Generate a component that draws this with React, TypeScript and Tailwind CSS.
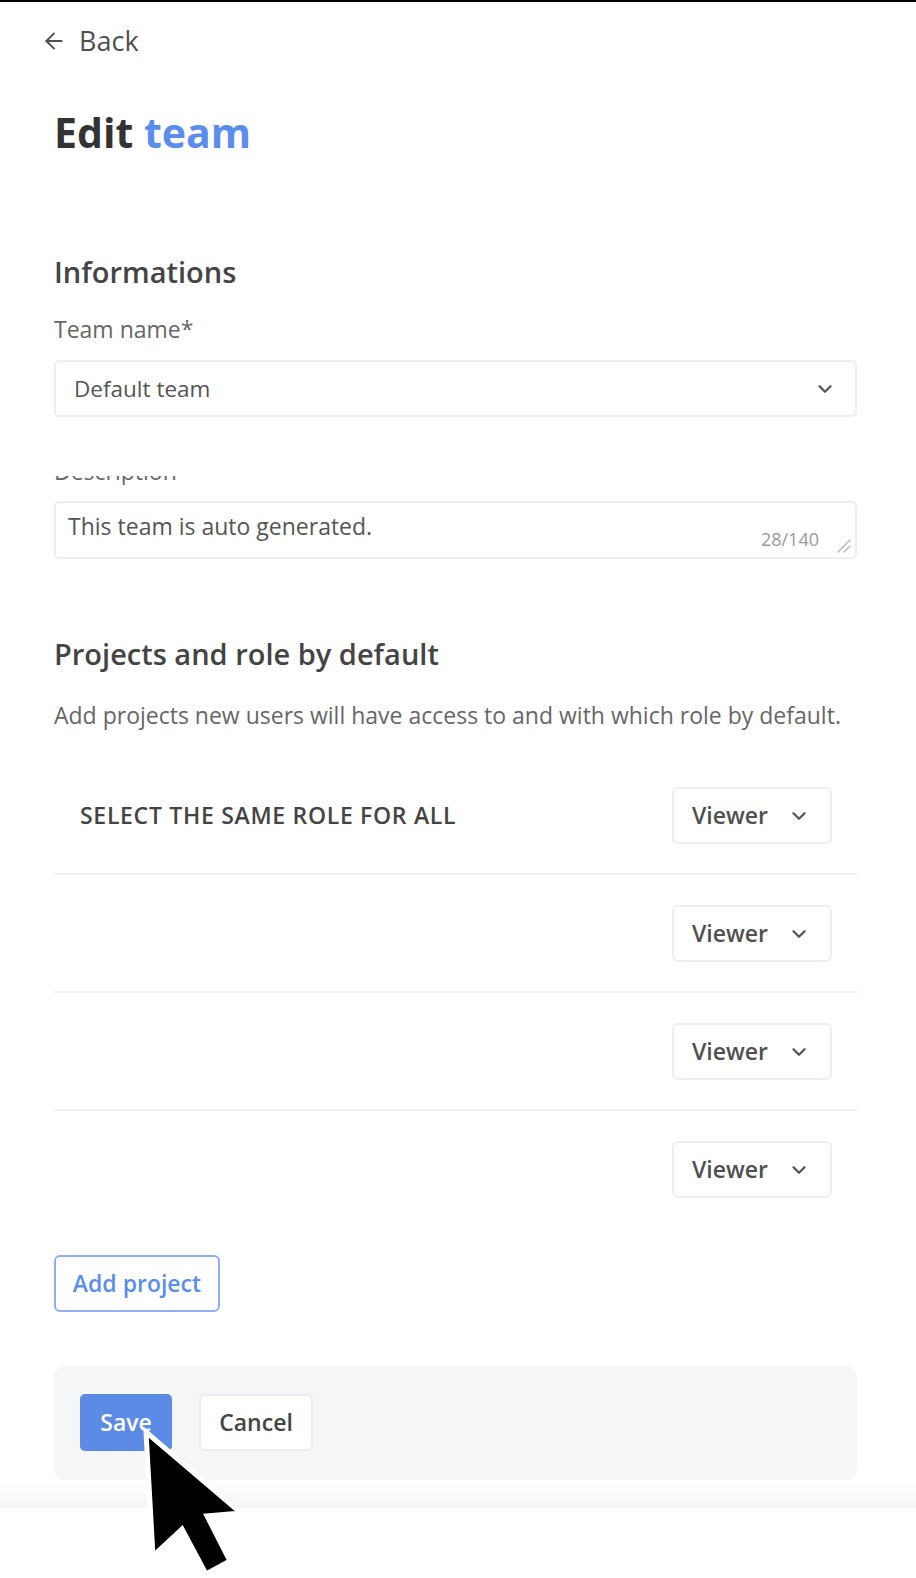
import { ArrowLeft, ChevronDown } from "lucide-react";

const FONT = { fontFamily: '"Open Sans", "Liberation Sans", sans-serif' };

function RoleSelect() {
  return (
    <button className="flex h-[57px] w-[160px] items-center justify-between rounded-[6px] border-2 border-[#eceef2] bg-white pl-[18px] pr-[20px] text-[23px] font-semibold text-[#505050]">
      <span>Viewer</span>
      <ChevronDown size={22} strokeWidth={2.5} className="text-[#555]" />
    </button>
  );
}

function ProjectRow({ label, last }: { label?: string; last?: boolean }) {
  return (
    <div
      className={`flex items-center justify-between pb-[29px] pl-[26px] pr-[25px] pt-[30px] ${
        last ? "" : "border-b-2 border-[#eef0f3]"
      }`}
    >
      <span className="text-[23px] font-semibold uppercase tracking-[0.7px] text-[#444]">{label}</span>
      <RoleSelect />
    </div>
  );
}

export default function App() {
  return (
    <div className="relative min-h-[1578px] w-[916px] overflow-hidden bg-white" style={FONT}>
      <div className="h-[2px] bg-black" />

      <a className="ml-[41px] mt-[24px] flex h-[30px] w-fit items-center gap-[12px] text-[27px] font-medium text-[#4f4f4f]">
        <ArrowLeft size={26} strokeWidth={1.8} />
        <span>Back</span>
      </a>

      <div className="ml-[54px] w-[803px]">
        <h1 className="mt-[52px] text-[41px] font-bold leading-[48px] text-[#333]">
          Edit <span className="text-[#5b8def]">team</span>
        </h1>

        <h2 className="mt-[98px] text-[29px] font-semibold leading-[36px] text-[#444]">Informations</h2>

        <label className="mt-[25px] block text-[23px] leading-[28px] text-[#666]">Team name*</label>
        <div className="mt-[17px] flex h-[57px] items-center justify-between rounded-[5px] border-2 border-[#eceef2] bg-white pl-[18px] pr-[19px]">
          <span className="text-[22.5px] text-[#555]">Default team</span>
          <ChevronDown size={22} strokeWidth={2.5} className="text-[#555]" />
        </div>

        {/* label is scrolled under the field above, only its lower part shows */}
        <div className="mt-[59px] h-[9px] overflow-hidden">
          <p className="mt-[-19px] text-[23px] leading-[28px] text-[#666]">Description</p>
        </div>
        <div className="relative mt-[16px] h-[58px] rounded-[5px] border-2 border-[#eceef2] bg-white pl-[12px] pt-[8px]">
          <span className="text-[23px] leading-[30px] text-[#555]">This team is auto generated.</span>
          <span className="absolute bottom-[7px] right-[36px] text-[18px] leading-[22px] text-[#9a9a9a]">28/140</span>
          <svg className="absolute bottom-[3px] right-[3px]" width="18" height="18" viewBox="0 0 18 18">
            <path d="M16 4 L4 16 M16 10 L10 16" stroke="#b8b8b8" strokeWidth="1.4" strokeLinecap="round" />
          </svg>
        </div>

        <h2 className="mt-[76px] text-[29px] font-semibold leading-[38px] text-[#444]">
          Projects and role by default
        </h2>
        <p className="mt-[27px] text-[23px] leading-[30px] text-[#666]">
          Add projects new users will have access to and with which role by default.
        </p>

        <div className="mt-[27px]">
          <ProjectRow label="Select the same role for all" />
          <ProjectRow />
          <ProjectRow />
          <ProjectRow last />
        </div>

        <button className="mt-[28px] h-[57px] w-[166px] rounded-[6px] border-2 border-[#8cb0f1] bg-white text-[23px] font-semibold text-[#5b8def]">
          Add project
        </button>

        <div className="mt-[54px] flex h-[114px] items-start gap-[27px] rounded-[12px] bg-[#f5f6f8] pl-[26px] pt-[28px]">
          <button className="h-[57px] w-[92px] rounded-[5px] bg-[#5b8be4] text-[23px] font-semibold text-white">
            Save
          </button>
          <button className="h-[57px] w-[114px] rounded-[5px] border-2 border-[#eceef2] bg-white text-[23px] font-semibold text-[#444]">
            Cancel
          </button>
        </div>
      </div>

      <div className="h-[28px] bg-gradient-to-b from-white to-[#f6f6f6]" />

      <svg className="absolute left-[135px] top-[1422px]" width="116" height="160" viewBox="0 0 116 160">
        <path
          d="M11 10 L18 134 L47 107 L71 152 L95 139 L72 94 L106 91 Z"
          fill="black"
          stroke="white"
          strokeWidth="5"
          strokeLinejoin="miter"
        />
      </svg>
    </div>
  );
}
